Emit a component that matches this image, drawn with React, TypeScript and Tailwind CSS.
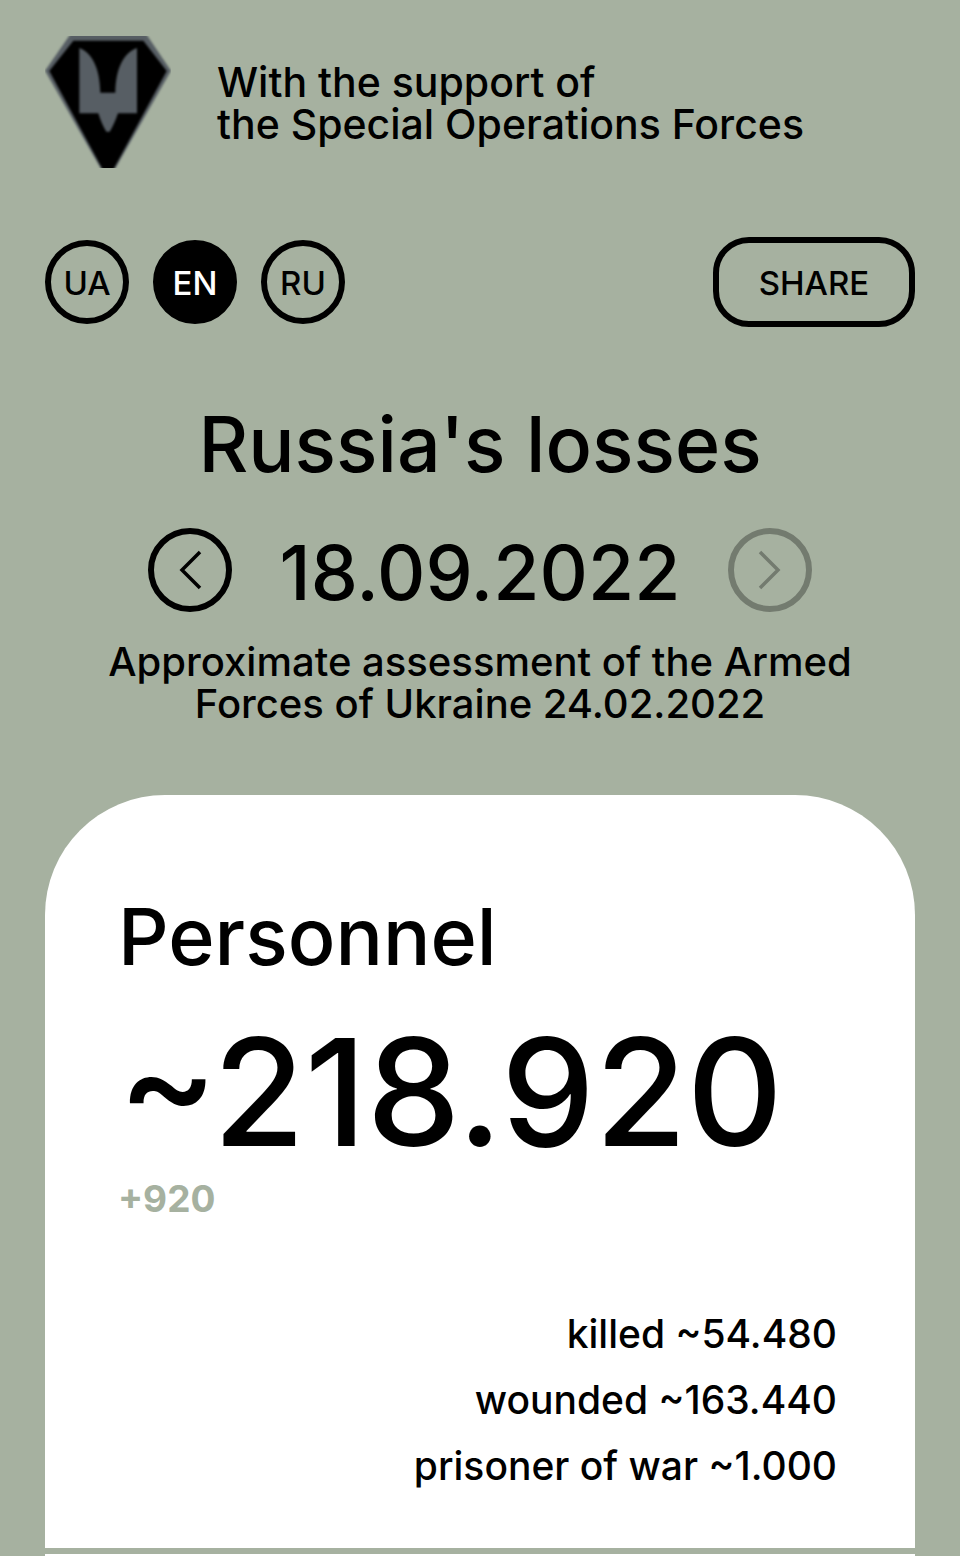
import { useState } from "react";

const languages = ["UA", "EN", "RU"];

const breakdown = [
  { label: "killed", value: "~54.480" },
  { label: "wounded", value: "~163.440" },
  { label: "prisoner of war", value: "~1.000" },
];

function Logo() {
  return (
    <svg viewBox="45 48 378 396" className="h-[132px] w-[126px] shrink-0" aria-hidden="true">
      <defs>
        <filter id="soften" x="-10%" y="-10%" width="120%" height="120%" colorInterpolationFilters="sRGB">
          <feGaussianBlur stdDeviation="3" />
        </filter>
      </defs>
      <g filter="url(#soften)">
        <path d="M123 40H347L423 152L252 452H216L45 152Z" fill="#575e64" />
        <path d="M130 62H340L410 153L248 452H220L58 153Z" fill="#000" />
        <path
          d="M148 84C186 98 210 145 211 218H256C257 145 281 98 321 84V280H264C257 300 249 320 239 335H229C219 320 211 300 205 280H148Z"
          fill="#575e64"
        />
      </g>
    </svg>
  );
}

function Chevron({ points }: { points: string }) {
  return (
    <svg viewBox="0 0 72 72" className="size-[72px]" fill="none" stroke="currentColor" strokeWidth="3.5" aria-hidden="true">
      <polyline points={points} />
    </svg>
  );
}

export default function App() {
  const [language, setLanguage] = useState("EN");

  return (
    <main className="flex min-h-screen flex-col bg-[#a6b1a0] px-[45px] pt-9 font-['Inter',sans-serif] text-[40px] leading-[42px] font-medium text-black">
      <header className="flex items-center gap-[46px]">
        <Logo />
        <p className="pt-0.5 text-[41px]">
          With the support of
          <br />
          the Special Operations Forces
        </p>
      </header>

      <nav className="mt-[69px] flex items-center justify-between text-[33px]">
        <div className="flex gap-6">
          {languages.map((code) => (
            <button
              key={code}
              type="button"
              aria-pressed={code === language}
              onClick={() => setLanguage(code)}
              className={
                code === language
                  ? "size-[84px] rounded-full border-6 border-black bg-black pt-0.5 text-white"
                  : "size-[84px] rounded-full border-6 border-black pt-0.5"
              }
            >
              {code}
            </button>
          ))}
        </div>
        <button type="button" className="h-[90px] w-[202px] rounded-[36px] border-6 border-black pt-0.5">
          SHARE
        </button>
      </nav>

      <section className="mt-[77px] text-center">
        <h1 className="text-[77px] leading-[80px]">Russia's losses</h1>
        <div className="mt-11 flex items-center justify-center gap-12">
          <button type="button" aria-label="Previous day" className="size-[84px] rounded-full border-6 border-black">
            <Chevron points="46,18 28,36 46,54" />
          </button>
          <time dateTime="2022-09-18" className="pt-1.5 text-[75px] leading-[78px]">
            18.09.2022
          </time>
          <button
            type="button"
            aria-label="Next day"
            disabled
            className="size-[84px] rounded-full border-6 border-black opacity-30"
          >
            <Chevron points="26,18 44,36 26,54" />
          </button>
        </div>
        <p className="mx-auto mt-[29px] max-w-[800px]">
          Approximate assessment of the Armed Forces of Ukraine 24.02.2022
        </p>
      </section>

      <section className="mt-[70px] rounded-t-[120px] bg-white pt-[101px] pr-[78px] pb-[49px] pl-[73px]">
        <h2 className="text-[79px] leading-[80px]">Personnel</h2>
        <p className="mt-9 text-[149px] leading-[160px]">~218.920</p>
        <p className="mt-1.5 text-[37px] font-bold text-[#a6b1a0]">+920</p>
        <ul className="mt-[81px] text-right text-[39px] leading-[66px]">
          {breakdown.map((item) => (
            <li key={item.label}>
              {item.label} {item.value}
            </li>
          ))}
        </ul>
      </section>
      <section className="mt-1.5 min-h-0.5 flex-1 bg-white" />
    </main>
  );
}
